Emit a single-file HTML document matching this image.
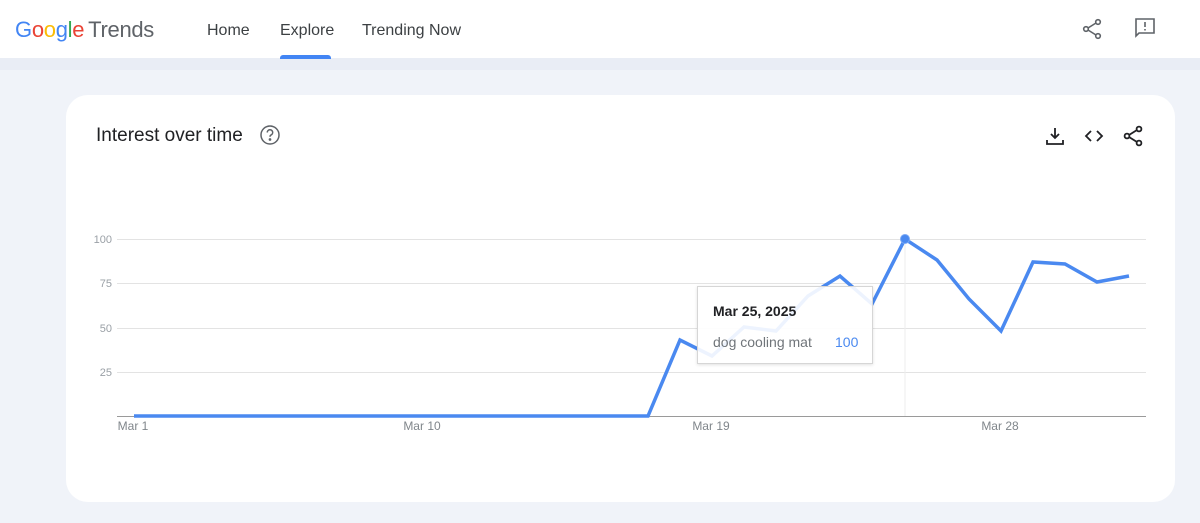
<!DOCTYPE html>
<html><head><meta charset="utf-8"><style>
body{margin:0;width:1200px;height:523px;background:#f0f3f9;font-family:"Liberation Sans",sans-serif;position:relative;overflow:hidden}
.hdr{position:absolute;left:0;top:0;width:1200px;height:58px;background:#fff}
.band{position:absolute;left:0;top:58px;width:1200px;height:12px;background:#e9edf5}
.logo{position:absolute;left:15px;top:17px;font-size:22px;letter-spacing:-0.3px}
.nav{position:absolute;top:22px;font-size:16px;color:#3c4043}
.card{position:absolute;left:66px;top:95px;width:1109px;height:407px;background:#fff;border-radius:22px}
.t{position:absolute;left:96px;top:125px;font-size:19px;color:#202124}
.tip{position:absolute;left:697px;top:286px;width:174px;height:76px;background:rgba(255,255,255,0.9);border:1px solid #d6d6d6;box-shadow:0 1px 3px rgba(0,0,0,.12)}
</style></head><body>
<div class="hdr"></div><div class="band"></div>
<div class="logo"><span style="color:#4285f4">G</span><span style="color:#ea4335">o</span><span style="color:#fbbc05">o</span><span style="color:#4285f4">g</span><span style="color:#34a853">l</span><span style="color:#ea4335">e</span><span style="color:#5f6368;margin-left:4px">Trends</span></div>
<div class="nav" style="left:207px">Home</div>
<div class="nav" style="left:280px">Explore</div>
<div style="position:absolute;left:280px;top:55px;width:51px;height:4px;background:#4285f4;border-radius:3px 3px 0 0"></div>
<div class="nav" style="left:362px">Trending Now</div>
<svg style="position:absolute;left:1080px;top:17px" width="24" height="24" viewBox="0 0 24 24" fill="none" stroke="#5f6368" stroke-width="1.6"><circle cx="18" cy="5" r="2.3"/><circle cx="6" cy="12" r="2.3"/><circle cx="18" cy="19" r="2.3"/><path d="M8 11 16 6M8 13 16 18"/></svg>
<svg style="position:absolute;left:1133px;top:16px" width="24" height="24" viewBox="0 0 24 24" fill="none" stroke="#5f6368" stroke-width="1.6"><path d="M3 3h18v14H6l-3 3z"/><path d="M12 6v5M12 13v1.5"/></svg>
<div class="card"></div>
<div class="t">Interest over time</div>
<svg style="position:absolute;left:259px;top:124px" width="22" height="22" viewBox="0 0 22 22" fill="none" stroke="#5f6368" stroke-width="1.5"><circle cx="11" cy="11" r="9"/><path d="M8.3 8.5a2.7 2.7 0 1 1 3.8 2.4c-.8.4-1.1 1-1.1 1.9"/><circle cx="11" cy="15.5" r=".6" fill="#5f6368"/></svg>
<svg style="position:absolute;left:1044px;top:125px" width="22" height="22" viewBox="0 0 22 22" fill="none" stroke="#202124" stroke-width="1.8"><path d="M11 3v10M7 9l4 4 4-4M3 15v4h16v-4"/></svg>
<svg style="position:absolute;left:1083px;top:125px" width="22" height="22" viewBox="0 0 22 22" fill="none" stroke="#202124" stroke-width="1.8"><path d="M8 6 3 11l5 5M14 6l5 5-5 5"/></svg>
<svg style="position:absolute;left:1122px;top:124px" width="22" height="24" viewBox="0 0 22 24" fill="none" stroke="#202124" stroke-width="1.8"><circle cx="17" cy="5" r="2.4"/><circle cx="5" cy="12" r="2.4"/><circle cx="17" cy="19" r="2.4"/><path d="M7 11 15 6M7 13 15 18"/></svg>
<svg style="position:absolute;left:0;top:0" width="1200" height="523">
<g stroke="#e3e3e3" stroke-width="1"><path d="M117 239.5H1146M117 283.5H1146M117 328.5H1146M117 372.5H1146"/></g>
<path d="M117 416.5H1146" stroke="#9a9a9a" stroke-width="1"/>
<path d="M905 239V416" stroke="#eeeeee" stroke-width="1"/>
<g font-size="11" fill="#9aa0a6" text-anchor="end"><text x="112" y="243">100</text><text x="112" y="287">75</text><text x="112" y="332">50</text><text x="112" y="376">25</text></g>
<g font-size="12" fill="#80868b" text-anchor="middle"><text x="133" y="430">Mar 1</text><text x="422" y="430">Mar 10</text><text x="711" y="430">Mar 19</text><text x="1000" y="430">Mar 28</text></g>
<polyline fill="none" stroke="#4a89f0" stroke-width="3.5" stroke-linejoin="miter" points="134,416 648,416 680,340 712,356 744,327 776,331 808,296 840,276 872,304 905,239 937,260 969,299 1001,331 1033,262 1065,264 1097,282 1129,276"/>
<circle cx="905" cy="239" r="4.5" fill="#4a89f0" stroke="#7aa8f5" stroke-width="1"/>
</svg>
<div class="tip">
<div style="position:absolute;left:15px;top:16px;font-size:14px;font-weight:bold;color:#202124">Mar 25, 2025</div>
<div style="position:absolute;left:15px;top:47px;font-size:14px;color:#70757a">dog cooling mat</div>
<div style="position:absolute;left:137px;top:47px;font-size:14px;color:#4a89f0">100</div>
</div>
</body></html>
